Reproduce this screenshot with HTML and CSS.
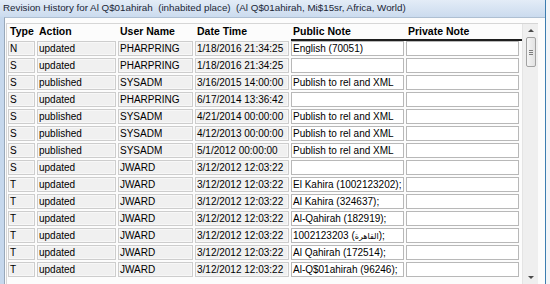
FILE: index.html
```html
<!DOCTYPE html>
<html lang="en">
<head>
    <meta charset="UTF-8">
    <title>Revision History</title>
    <link rel="stylesheet" href="styles.css">
</head>
<body>
    <div class="window">
        <div class="titlebar">Revision History for Al Q$01ahirah  (inhabited place)  (Al Q$01ahirah, Mi$15sr, Africa, World)</div>
        <div class="client">
            <div class="pane">
                <div class="grid-box">
                    <div class="grid">
                        <div class="head">
                            <span>Type</span>
                            <span>Action</span>
                            <span>User Name</span>
                            <span>Date Time</span>
                            <span>Public Note</span>
                            <span>Private Note</span>
                            <div class="head-rule"></div>
                        </div>
                        <div class="rows">
                            <div class="row"><span class="cell">N</span><span class="cell">updated</span><span class="cell">PHARPRING</span><span class="cell">1/18/2016 21:34:25</span><span class="cell edit">English (70051)</span><span class="cell edit"></span></div>
                            <div class="row"><span class="cell">S</span><span class="cell">updated</span><span class="cell">PHARPRING</span><span class="cell">1/18/2016 21:34:25</span><span class="cell edit"></span><span class="cell edit"></span></div>
                            <div class="row"><span class="cell">S</span><span class="cell">published</span><span class="cell">SYSADM</span><span class="cell">3/16/2015 14:00:00</span><span class="cell edit">Publish to rel and XML</span><span class="cell edit"></span></div>
                            <div class="row"><span class="cell">S</span><span class="cell">updated</span><span class="cell">PHARPRING</span><span class="cell">6/17/2014 13:36:42</span><span class="cell edit"></span><span class="cell edit"></span></div>
                            <div class="row"><span class="cell">S</span><span class="cell">published</span><span class="cell">SYSADM</span><span class="cell">4/21/2014 00:00:00</span><span class="cell edit">Publish to rel and XML</span><span class="cell edit"></span></div>
                            <div class="row"><span class="cell">S</span><span class="cell">published</span><span class="cell">SYSADM</span><span class="cell">4/12/2013 00:00:00</span><span class="cell edit">Publish to rel and XML</span><span class="cell edit"></span></div>
                            <div class="row"><span class="cell">S</span><span class="cell">published</span><span class="cell">SYSADM</span><span class="cell">5/1/2012 00:00:00</span><span class="cell edit">Publish to rel and XML</span><span class="cell edit"></span></div>
                            <div class="row"><span class="cell">S</span><span class="cell">updated</span><span class="cell">JWARD</span><span class="cell">3/12/2012 12:03:22</span><span class="cell edit"></span><span class="cell edit"></span></div>
                            <div class="row"><span class="cell">T</span><span class="cell">updated</span><span class="cell">JWARD</span><span class="cell">3/12/2012 12:03:22</span><span class="cell edit">El Kahira (1002123202);</span><span class="cell edit"></span></div>
                            <div class="row"><span class="cell">T</span><span class="cell">updated</span><span class="cell">JWARD</span><span class="cell">3/12/2012 12:03:22</span><span class="cell edit">Al Kahira (324637);</span><span class="cell edit"></span></div>
                            <div class="row"><span class="cell">T</span><span class="cell">updated</span><span class="cell">JWARD</span><span class="cell">3/12/2012 12:03:22</span><span class="cell edit">Al-Qahirah (182919);</span><span class="cell edit"></span></div>
                            <div class="row"><span class="cell">T</span><span class="cell">updated</span><span class="cell">JWARD</span><span class="cell">3/12/2012 12:03:22</span><span class="cell edit">1002123203 (<bdi class="ar">القاهرة</bdi>);</span><span class="cell edit"></span></div>
                            <div class="row"><span class="cell">T</span><span class="cell">updated</span><span class="cell">JWARD</span><span class="cell">3/12/2012 12:03:22</span><span class="cell edit">Al Qahirah (172514);</span><span class="cell edit"></span></div>
                            <div class="row"><span class="cell">T</span><span class="cell">updated</span><span class="cell">JWARD</span><span class="cell">3/12/2012 12:03:22</span><span class="cell edit">Al-Q$01ahirah (96246);</span><span class="cell edit"></span></div>
                        </div>
                    </div>
                    <div class="scrollbar">
                        <span class="arrow up"></span>
                        <div class="thumb"><span class="grip"></span></div>
                        <span class="arrow down"></span>
                    </div>
                </div>
            </div>
        </div>
    </div>
</body>
</html>
```

FILE: styles.css
```css
body {
    margin: 0;
    background-color: #f3f5f8;
    font-family: "Liberation Sans", Arial, sans-serif;
    color: #000;
}

.window {
    width: 545px;
    height: 284px;
    border-right: 1px solid #3d7db0;
    display: flex;
    flex-direction: column;
    overflow: hidden;
}

.titlebar {
    height: 17px;
    line-height: 16px;
    padding-left: 3px;
    font-size: 9.8px;
    color: #1b2636;
    white-space: pre;
    background: linear-gradient(#e3ecf7, #cbdbee);
}

.client {
    flex: 1;
    display: flex;
    min-height: 0;
    background-color: #c6d8ed;
    padding-left: 4px;
}

.pane {
    flex: 1;
    display: flex;
    min-height: 0;
    background-color: #fcfcfc;
    border-left: 1px solid #98a8ba;
    border-top: 1px solid #aebfd2;
    padding: 5px 0 0 1px;
}

.grid-box {
    display: flex;
    border-top: 1px solid #d6d6d6;
    border-left: 1px solid #d6d6d6;
}

.grid {
    padding: 0 3px 0 1px;
}

.head,
.row {
    display: grid;
    grid-template-columns: 27px 79px 75px 94px 113px 113px;
    column-gap: 2px;
}

.head {
    grid-template-rows: 15px 2px;
    font-size: 10.5px;
    font-weight: bold;
    line-height: 15px;
}

.head span {
    padding-left: 2px;
    white-space: nowrap;
}

.head-rule {
    grid-column: 5 / -1;
    background-color: #1e1e1e;
    margin-right: -3px;
}

.rows {
    display: flex;
    flex-direction: column;
    gap: 2px;
}

.cell {
    box-sizing: border-box;
    height: 15px;
    line-height: 13px;
    padding-left: 1px;
    font-size: 10px;
    white-space: nowrap;
    overflow: hidden;
    background-color: #f0f0f0;
    border: 1px solid #cdcdcd;
    box-shadow: inset 0 0 0 1px #f7f7f7;
}

.cell.edit {
    background-color: #fff;
    border-color: #b8b8b8;
    box-shadow: none;
}

.ar {
    font-family: "DejaVu Sans", sans-serif;
    font-size: 8px;
}

.scrollbar {
    width: 15px;
    display: flex;
    flex-direction: column;
    align-items: center;
    background-color: #efefef;
    border-left: 1px solid #e4e4e4;
}

.arrow {
    width: 0;
    height: 0;
    border-left: 3px solid transparent;
    border-right: 3px solid transparent;
}

.arrow.up {
    margin-top: 5px;
    border-bottom: 3px solid #4a4a4a;
}

.arrow.down {
    margin-top: auto;
    margin-bottom: 5px;
    border-top: 3px solid #4a4a4a;
}

.thumb {
    box-sizing: border-box;
    width: 10px;
    height: 30px;
    margin-top: 5px;
    border: 1px solid #a2a2a2;
    border-radius: 2px;
    background: linear-gradient(90deg, #f4f4f4, #e2e2e2);
    display: flex;
    align-items: center;
    justify-content: center;
}

.grip {
    width: 4px;
    height: 5px;
    background: repeating-linear-gradient(#7d7d7d 0 1px, transparent 1px 2px);
}
```
